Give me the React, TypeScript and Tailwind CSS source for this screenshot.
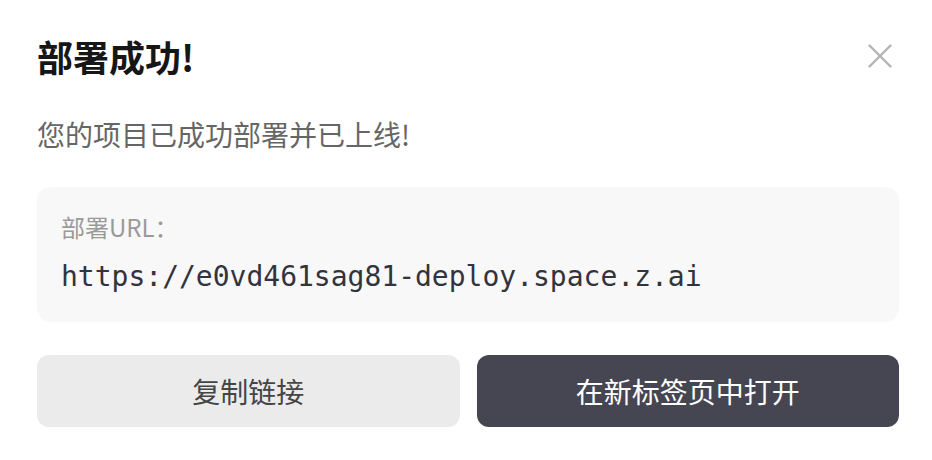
export default function App() {
  return (
    <div
      className="w-[932px] h-[460px] bg-white pl-[37px] pr-[33px] pt-[36px] flex flex-col"
      style={{ fontFamily: '"Noto Sans CJK SC", "Noto Sans", sans-serif' }}
    >
      {/* header */}
      <div className="flex items-center justify-between h-[40px]">
        <h1 className="text-[36px] leading-[40px] font-bold text-[#161616]">部署成功!</h1>
        <button className="w-[24px] h-[24px] mr-[7px] text-[#b3b3b3]" aria-label="关闭">
          <svg width="24" height="24" viewBox="0 0 24 24" fill="none" stroke="currentColor" strokeWidth="2.4" strokeLinecap="round">
            <path d="M1.5 1.5 22.5 22.5" />
            <path d="M22.5 1.5 1.5 22.5" />
          </svg>
        </button>
      </div>

      <p className="mt-[40px] text-[28px] leading-[36px] text-[#666666]">您的项目已成功部署并已上线!</p>

      {/* url card */}
      <div className="mt-[35px] h-[135px] rounded-[14px] bg-[#f8f8f8] px-[24px] pt-[24px] flex flex-col">
        <span className="text-[24px] leading-[32px] text-[#9a9a9a]">部署URL：</span>
        <span
          className="mt-[16px] text-[28px] leading-[36px] text-[#33333d]"
          style={{ fontFamily: '"DejaVu Sans Mono", "Liberation Mono", monospace' }}
        >
          https://e0vd461sag81-deploy.space.z.ai
        </span>
      </div>

      {/* actions */}
      <div className="mt-[33px] grid grid-cols-2 gap-[17px]">
        <button className="h-[72px] rounded-[12px] bg-[#ebebeb] text-[28px] text-[#454545]">复制链接</button>
        <button className="h-[72px] rounded-[12px] bg-[#464652] text-[28px] text-white">在新标签页中打开</button>
      </div>
    </div>
  );
}
